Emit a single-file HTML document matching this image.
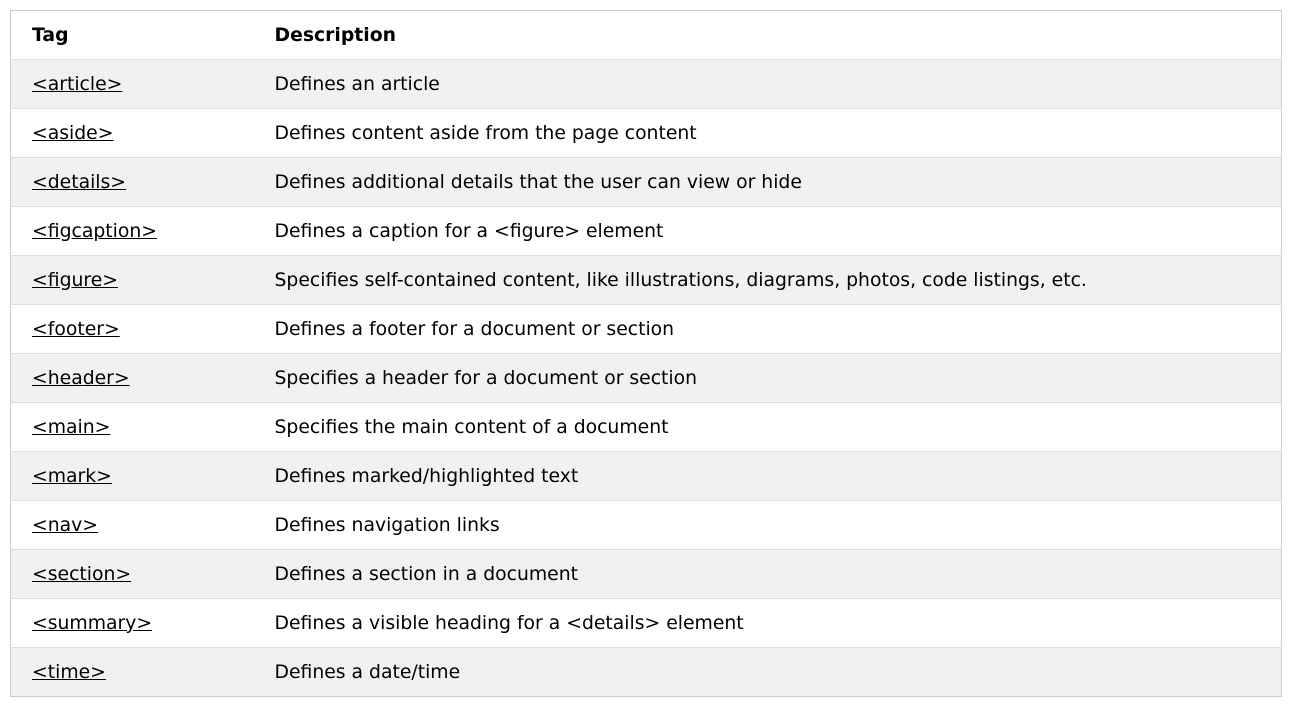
<!DOCTYPE html>
<html><head><meta charset="utf-8"><style>
html,body{margin:0;padding:0;background:#fff;}
table{position:absolute;left:10px;top:10px;width:1272px;border-collapse:collapse;border:1px solid #ccc;font-family:"DejaVu Sans","Liberation Sans",sans-serif;font-size:18.8px;color:#000;}
td,th{height:49px;padding:0 0 0 21px;text-align:left;vertical-align:middle;border-bottom:1px solid #ddd;box-sizing:border-box;}
th{font-weight:bold;}
td:first-child,th:first-child{width:243px;}
tr:nth-child(even){background:#f1f1f1;}
tr:last-child td{border-bottom:none;}
a{color:#000;text-decoration:underline;}
</style></head><body>
<table>
<tr><th>Tag</th><th>Description</th></tr>
<tr><td><a>&lt;article&gt;</a></td><td>Defines an article</td></tr>
<tr><td><a>&lt;aside&gt;</a></td><td>Defines content aside from the page content</td></tr>
<tr><td><a>&lt;details&gt;</a></td><td>Defines additional details that the user can view or hide</td></tr>
<tr><td><a>&lt;figcaption&gt;</a></td><td>Defines a caption for a &lt;figure&gt; element</td></tr>
<tr><td><a>&lt;figure&gt;</a></td><td>Specifies self-contained content, like illustrations, diagrams, photos, code listings, etc.</td></tr>
<tr><td><a>&lt;footer&gt;</a></td><td>Defines a footer for a document or section</td></tr>
<tr><td><a>&lt;header&gt;</a></td><td>Specifies a header for a document or section</td></tr>
<tr><td><a>&lt;main&gt;</a></td><td>Specifies the main content of a document</td></tr>
<tr><td><a>&lt;mark&gt;</a></td><td>Defines marked/highlighted text</td></tr>
<tr><td><a>&lt;nav&gt;</a></td><td>Defines navigation links</td></tr>
<tr><td><a>&lt;section&gt;</a></td><td>Defines a section in a document</td></tr>
<tr><td><a>&lt;summary&gt;</a></td><td>Defines a visible heading for a &lt;details&gt; element</td></tr>
<tr><td><a>&lt;time&gt;</a></td><td>Defines a date/time</td></tr>
</table>
</body></html>
